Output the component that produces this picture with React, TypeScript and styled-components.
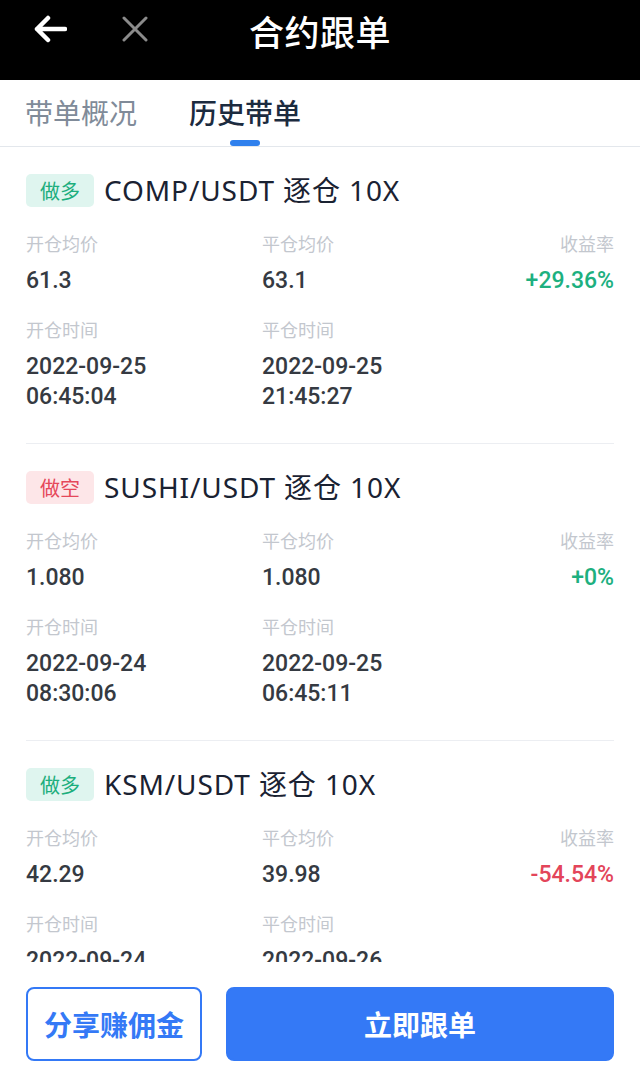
import React from 'react';
import styled, { createGlobalStyle } from 'styled-components';

const GlobalStyle = createGlobalStyle`
  html, body {
    margin: 0;
    padding: 0;
    background: #ffffff;
  }
  body {
    font-family: Roboto, "Noto Sans", "Noto Sans CJK SC", sans-serif;
    -webkit-font-smoothing: antialiased;
  }
  * {
    box-sizing: border-box;
  }
`;

type Side = 'long' | 'short';

interface Order {
  side: Side;
  symbol: string;
  openPrice: string;
  closePrice: string;
  rate: string;
  openDate: string;
  openTime: string;
  closeDate: string;
  closeTime: string;
}

const orders: Order[] = [
  {
    side: 'long',
    symbol: 'COMP/USDT',
    openPrice: '61.3',
    closePrice: '63.1',
    rate: '+29.36%',
    openDate: '2022-09-25',
    openTime: '06:45:04',
    closeDate: '2022-09-25',
    closeTime: '21:45:27',
  },
  {
    side: 'short',
    symbol: 'SUSHI/USDT',
    openPrice: '1.080',
    closePrice: '1.080',
    rate: '+0%',
    openDate: '2022-09-24',
    openTime: '08:30:06',
    closeDate: '2022-09-25',
    closeTime: '06:45:11',
  },
  {
    side: 'long',
    symbol: 'KSM/USDT',
    openPrice: '42.29',
    closePrice: '39.98',
    rate: '-54.54%',
    openDate: '2022-09-24',
    openTime: '10:12:33',
    closeDate: '2022-09-26',
    closeTime: '02:18:40',
  },
];

const Page = styled.div`
  width: 640px;
  height: 1088px;
  display: flex;
  flex-direction: column;
  background: #fff;
  overflow: hidden;
`;

const Header = styled.header`
  height: 80px;
  flex-shrink: 0;
  background: #000;
  display: grid;
  grid-template-columns: 1fr auto 1fr;
  align-items: start;
  padding: 12px 33px 0;
`;

const HeaderIcons = styled.div`
  display: flex;
  align-items: center;
  gap: 55px;
  height: 34px;
`;

const HeaderTitle = styled.h1`
  margin: 0;
  font-family: "Noto Sans CJK SC", sans-serif;
  font-weight: 500;
  font-size: 35px;
  line-height: 38px;
  color: #fff;
  letter-spacing: 0.5px;
`;

const TabBar = styled.nav`
  height: 67px;
  flex-shrink: 0;
  display: flex;
  align-items: flex-start;
  gap: 52px;
  padding: 0 25px;
  border-bottom: 1px solid #e3e7ec;
`;

const Tab = styled.div<{ $active?: boolean }>`
  position: relative;
  height: 66px;
  padding-top: 13px;
  font-family: "Noto Sans CJK SC", sans-serif;
  font-size: 28px;
  line-height: 38px;
  font-weight: ${({ $active }) => ($active ? 500 : 400)};
  color: ${({ $active }) => ($active ? '#1c2b3f' : '#808b99')};

  &::after {
    content: '';
    display: ${({ $active }) => ($active ? 'block' : 'none')};
    position: absolute;
    left: 50%;
    bottom: 0;
    width: 30px;
    height: 6px;
    margin-left: -15px;
    border-radius: 3px;
    background: #2f80ed;
  }
`;

const List = styled.div`
  flex: 1;
  overflow: hidden;
  padding: 0 26px;
`;

const Card = styled.section`
  padding: 27px 0 31px;
  border-bottom: 1px solid #eceef2;
`;

const CardHead = styled.div`
  display: flex;
  align-items: center;
  gap: 10px;
  height: 33px;
`;

const SideTag = styled.span<{ $side: Side }>`
  width: 68px;
  height: 33px;
  border-radius: 5px;
  display: flex;
  align-items: center;
  justify-content: center;
  font-family: "Noto Sans CJK SC", sans-serif;
  font-size: 20px;
  color: ${({ $side }) => ($side === 'long' ? '#1cae7d' : '#e5485a')};
  background: ${({ $side }) => ($side === 'long' ? '#dff5ef' : '#fde6e8')};
`;

const Symbol = styled.span`
  font-family: "Noto Sans", "Noto Sans CJK SC", sans-serif;
  font-size: 28px;
  line-height: 33px;
  letter-spacing: 0.9px;
  color: #1a2232;
`;

const Fields = styled.div`
  display: grid;
  grid-template-columns: 236px 1fr auto;
  margin-top: 24px;
`;

const Field = styled.div<{ $right?: boolean; $gap?: boolean }>`
  display: flex;
  flex-direction: column;
  align-items: ${({ $right }) => ($right ? 'flex-end' : 'flex-start')};
  gap: 11px;
  margin-top: ${({ $gap }) => ($gap ? '21px' : '0')};
`;

const Label = styled.span`
  font-family: "Noto Sans CJK SC", sans-serif;
  font-size: 18px;
  line-height: 24px;
  color: #c3c7ce;
`;

const Value = styled.span<{ $tone?: 'up' | 'down' }>`
  font-family: Roboto, sans-serif;
  font-size: 23px;
  font-weight: 500;
  line-height: 30px;
  white-space: pre-line;
  color: ${({ $tone }) =>
    $tone === 'up' ? '#1db07f' : $tone === 'down' ? '#e3455a' : '#353a42'};
`;

const Footer = styled.footer`
  height: 126px;
  flex-shrink: 0;
  display: flex;
  gap: 24px;
  padding: 25px 26px 0;
  background: #fff;
`;

const Button = styled.button<{ $primary?: boolean }>`
  height: 74px;
  border-radius: 8px;
  font-family: "Noto Sans CJK SC", sans-serif;
  font-weight: 700;
  font-size: 28px;
  cursor: pointer;
  border: 2px solid #3479f6;
  padding: 0;
  width: ${({ $primary }) => ($primary ? 'auto' : '176px')};
  flex: ${({ $primary }) => ($primary ? 1 : 'none')};
  background: ${({ $primary }) => ($primary ? '#3479f6' : '#fff')};
  color: ${({ $primary }) => ($primary ? '#fff' : '#3479f6')};
`;

const BackIcon = () => (
  <svg width="34" height="28" viewBox="0 0 34 28">
    <path
      d="M15 3 L4 14 L15 25 M4 14 H32"
      fill="none"
      stroke="#fff"
      strokeWidth="4.5"
      strokeLinecap="round"
      strokeLinejoin="round"
    />
  </svg>
);

const CloseIcon = () => (
  <svg width="26" height="26" viewBox="0 0 26 26">
    <path
      d="M2 2 L24 24 M24 2 L2 24"
      fill="none"
      stroke="#8b8b8b"
      strokeWidth="3"
      strokeLinecap="round"
    />
  </svg>
);

const rateTone = (rate: string): 'up' | 'down' => (rate.startsWith('-') ? 'down' : 'up');

const OrderCard: React.FC<{ order: Order }> = ({ order }) => (
  <Card>
    <CardHead>
      <SideTag $side={order.side}>{order.side === 'long' ? '做多' : '做空'}</SideTag>
      <Symbol>{order.symbol} 逐仓 10X</Symbol>
    </CardHead>
    <Fields>
      <Field>
        <Label>开仓均价</Label>
        <Value>{order.openPrice}</Value>
      </Field>
      <Field>
        <Label>平仓均价</Label>
        <Value>{order.closePrice}</Value>
      </Field>
      <Field $right>
        <Label>收益率</Label>
        <Value $tone={rateTone(order.rate)}>{order.rate}</Value>
      </Field>
      <Field $gap>
        <Label>开仓时间</Label>
        <Value>{`${order.openDate}\n${order.openTime}`}</Value>
      </Field>
      <Field $gap>
        <Label>平仓时间</Label>
        <Value>{`${order.closeDate}\n${order.closeTime}`}</Value>
      </Field>
    </Fields>
  </Card>
);

export default function App() {
  return (
    <Page>
      <GlobalStyle />
      <Header>
        <HeaderIcons>
          <BackIcon />
          <CloseIcon />
        </HeaderIcons>
        <HeaderTitle>合约跟单</HeaderTitle>
        <div />
      </Header>
      <TabBar>
        <Tab>带单概况</Tab>
        <Tab $active>历史带单</Tab>
      </TabBar>
      <List>
        {orders.map((o, i) => (
          <OrderCard key={i} order={o} />
        ))}
      </List>
      <Footer>
        <Button>分享赚佣金</Button>
        <Button $primary>立即跟单</Button>
      </Footer>
    </Page>
  );
}
